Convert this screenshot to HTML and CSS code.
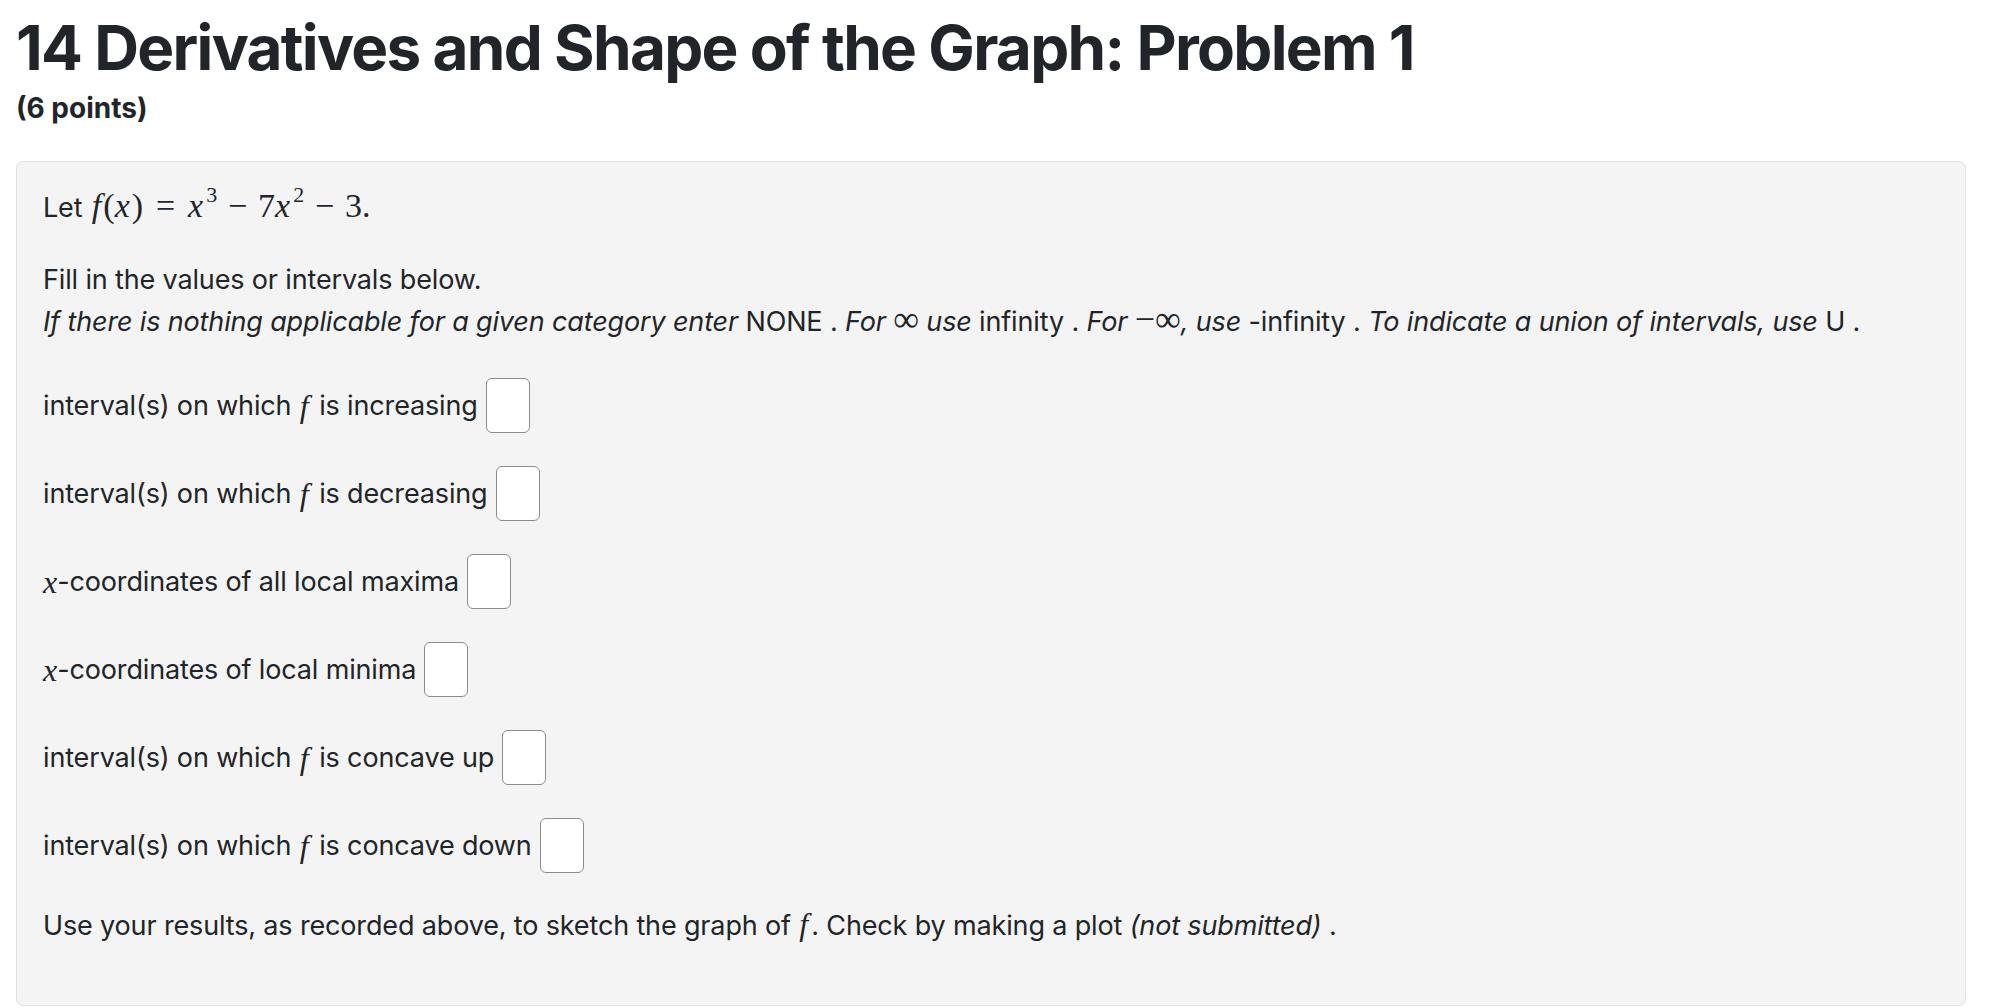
FILE: index.html
```html
<!DOCTYPE html>
<html lang="en">
<head>
<meta charset="utf-8">
<title>14 Derivatives and Shape of the Graph: Problem 1</title>
<link rel="stylesheet" href="styles.css">
</head>
<body>
<div class="page">
  <h1 class="title">14 Derivatives and Shape of the Graph: Problem 1</h1>
  <div class="points">(6 points)</div>
  <div class="problem">
    <p class="intro">Let <span class="m eq"><i>f</i>(<i>x</i>)<span class="rel">=</span><i>x</i><sup>3</sup><span class="bin">−</span>7<i>x</i><sup>2</sup><span class="bin">−</span>3.</span></p>
    <p class="fill">Fill in the values or intervals below.<br><em>If there is nothing applicable for a given category enter</em> NONE . <em>For <span class="m up inf">∞</span> use</em> infinity . <em>For <span class="m up inf">−∞</span>, use</em> -infinity . <em>To indicate a union of intervals, use</em> U .</p>
    <div class="rows">
      <div class="row">interval(s) on which <span class="m f">f</span> is increasing<span class="ans"></span></div>
      <div class="row">interval(s) on which <span class="m f">f</span> is decreasing<span class="ans"></span></div>
      <div class="row"><span class="m">x</span>-coordinates of all local maxima<span class="ans"></span></div>
      <div class="row"><span class="m">x</span>-coordinates of local minima<span class="ans"></span></div>
      <div class="row">interval(s) on which <span class="m f">f</span> is concave up<span class="ans"></span></div>
      <div class="row">interval(s) on which <span class="m f">f</span> is concave down<span class="ans"></span></div>
    </div>
    <p class="closing">Use your results, as recorded above, to sketch the graph of <span class="m f">f</span>. Check by making a plot <em>(not submitted)</em> .</p>
  </div>
</div>
</body>
</html>
```
FILE: styles.css
```css
html, body {
  margin: 0;
  padding: 0;
  background: #ffffff;
}
body {
  font-family: Inter, "Noto Sans", "Liberation Sans", sans-serif;
  color: #212529;
}
.page {
  padding: 9px 46px 0 16px;
}
.title {
  margin: 0;
  font-size: 62px;
  line-height: 77px;
  font-weight: 700;
  letter-spacing: -1.7px;
}
.points {
  margin-top: 3px;
  font-size: 28px;
  line-height: 38px;
  font-weight: 700;
}
.problem {
  margin-top: 34px;
  background: #f4f4f4;
  border: 1px solid #e2e2e2;
  border-radius: 7px;
  padding: 23px 24px 58px 26px;
  font-size: 27px;
  line-height: 42px;
  letter-spacing: -0.15px;
}
.problem p {
  margin: 0;
}
.fill {
  margin-top: 30px !important;
}
.m {
  font-family: "Liberation Serif", "DejaVu Serif", serif;
  font-size: 32px;
  font-style: italic;
  letter-spacing: 0;
}
.m i { font-style: italic; padding-right: 1px; }
.intro .m {
  font-style: normal;
}
.eq {
  font-size: 34px;
  margin-left: 2px;
}
.eq i { padding-right: 2px; }
.rel {
  margin: 0 0.38em;
}
.bin {
  margin: 0 0.32em;
}
.m sup {
  font-size: 22px;
  font-style: normal;
  line-height: 0;
  vertical-align: 15px;
  margin-left: 1px;
}
.m.up {
  font-style: normal;
}
.inf {
  font-size: 36px;
  line-height: 0;
}
.f {
  padding: 0 3px 0 1px;
}
.rows {
  margin-top: 35px;
  display: flex;
  flex-direction: column;
  gap: 33px;
}
.row {
  display: flex;
  align-items: center;
  height: 55px;
  white-space: pre;
}
.ans {
  display: inline-block;
  width: 44px;
  height: 55px;
  box-sizing: border-box;
  margin-left: 8px;
  background: #ffffff;
  border: 1.5px solid #8c8c8c;
  border-radius: 6px;
}
.closing {
  margin-top: 30px !important;
}
```
